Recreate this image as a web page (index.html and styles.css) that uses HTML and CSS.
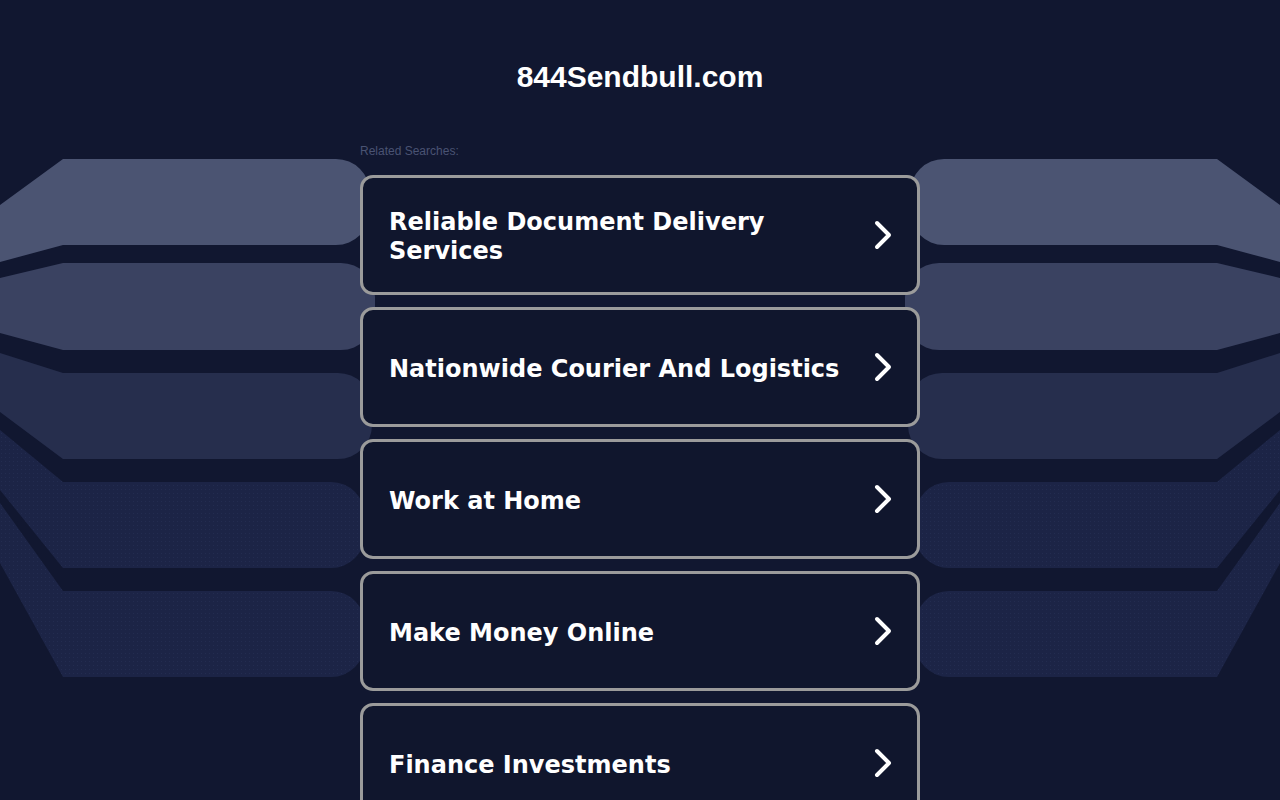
FILE: index.html
```html
<!DOCTYPE html>
<html lang="en">
<head>
<meta charset="utf-8">
<title>844Sendbull.com</title>
<link rel="stylesheet" href="styles.css">
</head>
<body>
<svg class="bg" viewBox="0 0 1280 800" width="1280" height="800" aria-hidden="true">
  <defs>
    <pattern id="dots" width="4" height="4" patternUnits="userSpaceOnUse">
      <rect width="4" height="4" fill="#1c2446"/>
      <rect x="1" y="1" width="1" height="1" fill="#232c50"/>
    </pattern>
    <g id="bands">
      <path fill="#4b5472" d="M0 205 L63 159 H336 A34 34 0 0 1 370 193 V211 A34 34 0 0 1 336 245 H63 L0 262 Z"/>
      <path fill="#3a4261" d="M0 278 L63 263 H341 A34 34 0 0 1 375 297 V316 A34 34 0 0 1 341 350 H63 L0 333 Z"/>
      <path fill="#262e4d" d="M0 353 L63 373 H338 A34 34 0 0 1 372 407 V425 A34 34 0 0 1 338 459 H63 L0 412 Z"/>
      <path fill="url(#dots)" d="M0 430 L63 482 H331 A34 34 0 0 1 365 516 V534 A34 34 0 0 1 331 568 H63 L0 490 Z"/>
      <path fill="url(#dots)" d="M0 503 L63 591 H331 A34 34 0 0 1 365 625 V643 A34 34 0 0 1 331 677 H63 L0 563 Z"/>
    </g>
  </defs>
  <use href="#bands"/>
  <use href="#bands" transform="translate(1280 0) scale(-1 1)"/>
</svg>
<main class="page">
  <h1 class="site-title">844Sendbull.com</h1>
  <p class="related">Related Searches:</p>
  <ul class="links">
    <li><a class="card" href="#"><span class="card-text">Reliable Document Delivery Services</span><svg class="chev" viewBox="0 0 20 30" width="20" height="30"><path d="M4 3 L16 15 L4 27" /></svg></a></li>
    <li><a class="card" href="#"><span class="card-text">Nationwide Courier And Logistics</span><svg class="chev" viewBox="0 0 20 30" width="20" height="30"><path d="M4 3 L16 15 L4 27" /></svg></a></li>
    <li><a class="card" href="#"><span class="card-text">Work at Home</span><svg class="chev" viewBox="0 0 20 30" width="20" height="30"><path d="M4 3 L16 15 L4 27" /></svg></a></li>
    <li><a class="card" href="#"><span class="card-text">Make Money Online</span><svg class="chev" viewBox="0 0 20 30" width="20" height="30"><path d="M4 3 L16 15 L4 27" /></svg></a></li>
    <li><a class="card" href="#"><span class="card-text">Finance Investments</span><svg class="chev" viewBox="0 0 20 30" width="20" height="30"><path d="M4 3 L16 15 L4 27" /></svg></a></li>
  </ul>
</main>
</body>
</html>
```
FILE: styles.css
```css
html, body {
  margin: 0;
  padding: 0;
}
body {
  background: #111730;
  min-height: 800px;
  position: relative;
  overflow: hidden;
  font-family: "Liberation Sans", Arial, sans-serif;
}
.bg {
  position: absolute;
  left: 0;
  top: 0;
  z-index: 0;
}
.page {
  position: relative;
  z-index: 1;
  width: 560px;
  margin: 0 auto;
  padding-top: 59px;
}
.site-title {
  margin: 0;
  text-align: center;
  color: #ffffff;
  font-family: "Liberation Sans", Arial, sans-serif;
  font-weight: 700;
  font-size: 30px;
  line-height: 36px;
}
.related {
  margin: 49px 0 0;
  font-size: 12px;
  line-height: 14px;
  color: #4a5373;
}
.links {
  list-style: none;
  margin: 17px 0 0;
  padding: 0;
  display: flex;
  flex-direction: column;
  gap: 12px;
}
.card {
  box-sizing: border-box;
  height: 120px;
  display: flex;
  align-items: center;
  justify-content: space-between;
  padding: 4px 24px 0 26px;
  border: 3px solid #9b9b9b;
  border-radius: 13px;
  background: #10162d;
  text-decoration: none;
  color: #ffffff;
}
.card-text {
  font-family: "DejaVu Sans", Verdana, sans-serif;
  font-weight: 700;
  font-size: 24px;
  line-height: 29px;
  max-width: 460px;
}
.chev {
  flex: none;
  margin-top: -4px;
}
.chev path {
  fill: none;
  stroke: #ffffff;
  stroke-width: 4;
  stroke-linecap: round;
  stroke-linejoin: round;
}
```
